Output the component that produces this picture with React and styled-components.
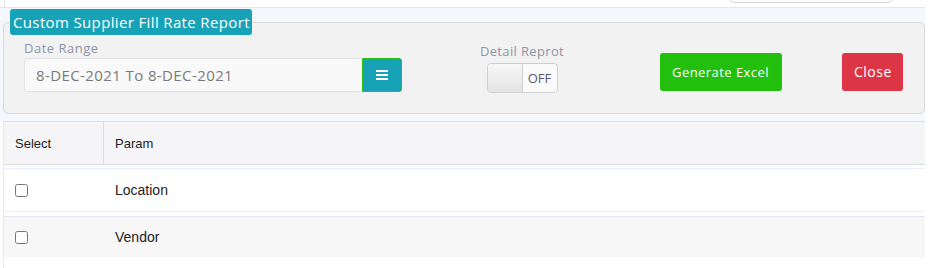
import React from "react";
import styled, { createGlobalStyle } from "styled-components";

const Global = createGlobalStyle`
  html, body { margin: 0; padding: 0; background: #ffffff; }
  body { font-family: "Open Sans", "Liberation Sans", sans-serif; }
  * { box-sizing: border-box; }
`;

const Main = styled.div`
  width: 925px;
`;

const TopBar = styled.div`
  height: 8px;
  background: #ffffff;
  border-bottom: 1px solid #e4e7ee;
  display: flex;
  justify-content: space-between;
  overflow: hidden;
`;

const TopEdge = styled.div`
  margin-left: 4px;
  width: 1px;
  background: #e2e4ea;
`;

const SearchStub = styled.div`
  margin-top: -20px;
  margin-right: 30px;
  width: 168px;
  height: 23px;
  border: 1px solid #d9d9d9;
  border-radius: 8px;
  background: #fff;
`;

const FilterBand = styled.div`
  background: #f4f7fc;
  padding: 1px 0 7px 3px;
`;

const Panel = styled.fieldset`
  margin: 0;
  padding: 0 0 20px 6px;
  border: 1px solid #dadada;
  border-radius: 5px;
  background: #f2f2f2;
  min-width: 0;
`;

const Legend = styled.legend`
  background: #17a2b8;
  color: #ffffff;
  font-size: 15px;
  line-height: 26px;
  height: 26px;
  padding: 0 2px 0 3px;
  border-radius: 3px;
  letter-spacing: 0.36px;
`;

const Row = styled.div`
  display: flex;
  align-items: flex-start;
  padding-left: 14px;
  margin-top: 4px;
`;

const Field = styled.div`
  display: flex;
  flex-direction: column;
`;

const Label = styled.div`
  font-size: 13px;
  line-height: 19px;
  color: #8e93a6;
  letter-spacing: ${(p) => p.$ls || 0}px;
`;

const InputGroup = styled.div`
  display: flex;
  height: 34px;
`;

const DateInput = styled.div`
  width: 338px;
  height: 34px;
  background: #f9f9f9;
  border: 1px solid #e3e3e3;
  border-right: none;
  border-radius: 4px 0 0 4px;
  font-size: 15px;
  letter-spacing: 0.4px;
  line-height: 32px;
  color: #7a7a7a;
  padding-left: 11px;
`;

const MenuButton = styled.div`
  width: 40px;
  height: 34px;
  background: #17a2b8;
  border: 1px solid #2ec21a;
  border-radius: 0 3px 3px 0;
  display: flex;
  align-items: center;
  justify-content: center;
`;

const ToggleField = styled.div`
  display: flex;
  flex-direction: column;
  align-items: center;
  width: 90px;
  margin-left: 75px;
  margin-top: 3px;
`;

const Toggle = styled.div`
  margin-top: 2px;
  width: 71px;
  height: 30px;
  border: 1px solid #cfcfcf;
  border-radius: 4px;
  display: flex;
  overflow: hidden;
  background: #fafafa;
`;

const Knob = styled.div`
  width: 35px;
  background: linear-gradient(#f7f7f7, #e3e3e3);
  border-right: 1px solid #cfcfcf;
`;

const ToggleText = styled.div`
  flex: 1;
  text-align: center;
  font-size: 13px;
  line-height: 28px;
  color: #5b5670;
`;

const Button = styled.div`
  height: 38px;
  padding: 0 ${(p) => p.$pr}px 0 ${(p) => p.$pl}px;
  margin-left: ${(p) => p.$ml}px;
  margin-top: 14px;
  border-radius: 3px;
  background: ${(p) => p.$bg};
  color: #ffffff;
  font-size: ${(p) => p.$fs}px;
  letter-spacing: ${(p) => p.$ls}px;
  line-height: 38px;
  white-space: nowrap;
`;

const Table = styled.div`
  margin-left: 3px;
  border-left: 1px solid #e6ebf5;
  min-height: 147px;
  background: #ffffff;
  font-family: "Liberation Sans", Arial, sans-serif;
`;

const HeadRow = styled.div`
  display: grid;
  grid-template-columns: 100px 1fr;
  height: 44px;
  background: #f5f5f7;
  border-top: 1px solid #dddde2;
  border-bottom: 1px solid #dcdce0;
`;

const HeadCell = styled.div`
  display: flex;
  align-items: center;
  padding-left: ${(p) => p.$pl}px;
  font-size: 13px;
  color: #222;
  border-right: ${(p) => (p.$divider ? "1px solid #dcdce0" : "none")};
`;

const BodyRow = styled.div`
  display: grid;
  grid-template-columns: 100px 1fr;
  height: ${(p) => p.$h}px;
  margin-top: ${(p) => p.$mt}px;
  background: ${(p) => (p.$striped ? "#f7f7f7" : "#ffffff")};
  border-top: 1px solid ${(p) => (p.$striped ? "#e6e6f0" : "#e8eefa")};
  border-bottom: ${(p) => (p.$striped ? "none" : "1px solid #e8eefa")};
`;

const Cell = styled.div`
  display: flex;
  align-items: center;
  padding-left: ${(p) => p.$pl}px;
  font-size: 14px;
  color: #222;
`;

const Check = styled.input`
  margin: 0;
  width: 13px;
  height: 13px;
`;

const rows = ["Location", "Vendor"];

export default function App() {
  return (
    <Main>
      <Global />
      <TopBar>
        <TopEdge />
        <SearchStub />
      </TopBar>
      <FilterBand>
        <Panel>
          <Legend>Custom Supplier Fill Rate Report</Legend>
          <Row>
            <Field>
              <Label $ls={0.5}>Date Range</Label>
              <InputGroup>
                <DateInput>8-DEC-2021 To 8-DEC-2021</DateInput>
                <MenuButton>
                  <svg width="12" height="10" viewBox="0 0 12 10">
                    <rect x="0" y="0" width="12" height="2" fill="#fff" />
                    <rect x="0" y="4" width="12" height="2" fill="#fff" />
                    <rect x="0" y="8" width="12" height="2" fill="#fff" />
                  </svg>
                </MenuButton>
              </InputGroup>
            </Field>
            <ToggleField>
              <Label $ls={0.35}>Detail Reprot</Label>
              <Toggle>
                <Knob />
                <ToggleText>OFF</ToggleText>
              </Toggle>
            </ToggleField>
            <Button $bg="#22bf0c" $pl={12} $pr={13} $ml={93} $fs={13} $ls={0.45}>Generate Excel</Button>
            <Button $bg="#dc3545" $pl={12} $pr={11} $ml={60} $fs={14} $ls={0.5}>Close</Button>
          </Row>
        </Panel>
      </FilterBand>
      <Table>
        <HeadRow>
          <HeadCell $pl={11} $divider>Select</HeadCell>
          <HeadCell $pl={11}>Param</HeadCell>
        </HeadRow>
        {rows.map((r, i) => (
          <BodyRow key={r} $striped={i % 2 === 1} $h={i === 0 ? 44 : 41} $mt={i === 0 ? 3 : 4}>
            <Cell $pl={11}>
              <Check type="checkbox" />
            </Cell>
            <Cell $pl={11}>{r}</Cell>
          </BodyRow>
        ))}
      </Table>
    </Main>
  );
}
